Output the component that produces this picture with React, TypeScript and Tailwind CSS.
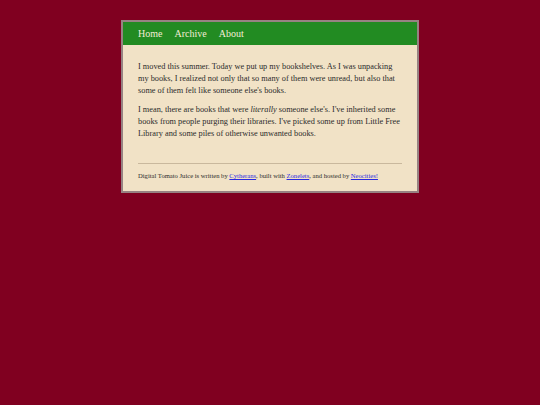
export default function App() {
  return (
    <div className="min-h-[405px] bg-[#800020] pt-[20px] font-['Liberation_Serif',serif]">
      <div className="mx-auto w-[298px] border-2 border-[#978282] bg-[#f1e2c6]">
        <nav className="flex h-[23px] items-center gap-[12px] bg-[#228b22] px-[15px] text-[10px] text-[#f3ecd6]">
          <a href="#">Home</a>
          <a href="#">Archive</a>
          <a href="#">About</a>
        </nav>
        <main className="px-[15px] pt-[16px] pb-[10px] text-[8.3px] leading-[12px] text-[#2b2b2b]">
          <p>
            I moved this summer. Today we put up my bookshelves. As I was unpacking my books, I realized not only that so
            many of them were unread, but also that some of them felt like someone else's books.
          </p>
          <p className="mt-[7px]">
            I mean, there are books that were <em>literally</em> someone else's. I've inherited some books from people
            purging their libraries. I've picked some up from Little Free Library and some piles of otherwise unwanted
            books.
          </p>
          <footer className="mt-[23px] border-t border-[#c9b89d] pt-[7px] text-[6.6px] leading-[10px]">
            Digital Tomato Juice is written by{' '}
            <a href="#" className="text-[#2a2ae0] underline">Cytherans</a>, built with{' '}
            <a href="#" className="text-[#2a2ae0] underline">Zonelets</a>, and hosted by{' '}
            <a href="#" className="text-[#2a2ae0] underline">Neocities!</a>
          </footer>
        </main>
      </div>
    </div>
  )
}
